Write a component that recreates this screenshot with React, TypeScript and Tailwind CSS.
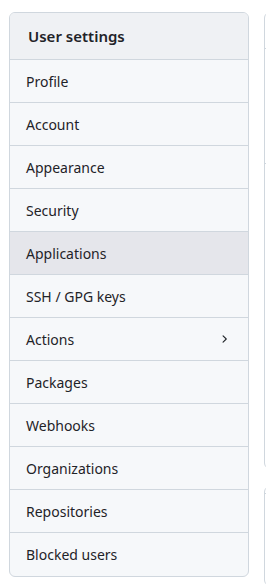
import type { FC } from "react";

const ITEMS: string[] = [
  "Profile",
  "Account",
  "Appearance",
  "Security",
  "Applications",
  "SSH / GPG keys",
  "Actions",
  "Packages",
  "Webhooks",
  "Organizations",
  "Repositories",
  "Blocked users",
];

const ChevronRight: FC = () => (
  <svg width="12" height="12" viewBox="0 0 16 16" fill="currentColor" className="text-[#1f2328]">
    <path d="M6.22 3.22a.75.75 0 0 1 1.06 0l4.25 4.25a.75.75 0 0 1 0 1.06l-4.25 4.25a.751.751 0 0 1-1.042-.018.751.751 0 0 1-.018-1.042L9.94 8 6.22 4.28a.75.75 0 0 1 0-1.06Z" />
  </svg>
);

const SettingsMenu: FC<{ active: string }> = ({ active }) => (
  <nav className="w-[240px] shrink-0 self-start rounded-md border border-[#d0d7de] bg-[#f6f8fa] overflow-hidden">
    <div className="h-[47px] flex items-center px-[18px] bg-[#eff1f4] border-b border-[#d0d7de] text-[15px] font-semibold text-[#1f2328]">
      User settings
    </div>
    {ITEMS.map((item, i) => (
      <div
        key={item}
        className={`h-[43px] flex items-center justify-between pl-4 pr-[18px] text-[14px] text-[#1f2328] ${
          i < ITEMS.length - 1 ? "border-b border-[#d0d7de]" : ""
        } ${item === active ? "bg-[#e5e6eb]" : ""}`}
      >
        <span>{item}</span>
        {item === "Actions" && <ChevronRight />}
      </div>
    ))}
  </nav>
);

export default function App() {
  return (
    <div
      className="w-[266px] h-[588px] bg-white overflow-hidden flex items-start gap-[15px] pt-3 pl-[9px]"
      style={{ fontFamily: '"Noto Sans", "Open Sans", sans-serif' }}
    >
      <SettingsMenu active="Applications" />
      <div className="flex flex-col gap-[17px] shrink-0">
        <div className="w-[200px] h-[457px] rounded-md border border-[#d0d7de] bg-white">
          <div className="h-[36px] border-b border-[#d0d7de]" />
          <div className="h-[115px] border-b border-[#d0d7de]" />
        </div>
        <div className="w-[200px] h-[100px] rounded-md border border-[#d0d7de] bg-white">
          <div className="h-[7px] border-b border-[#d0d7de]" />
        </div>
      </div>
    </div>
  );
}
